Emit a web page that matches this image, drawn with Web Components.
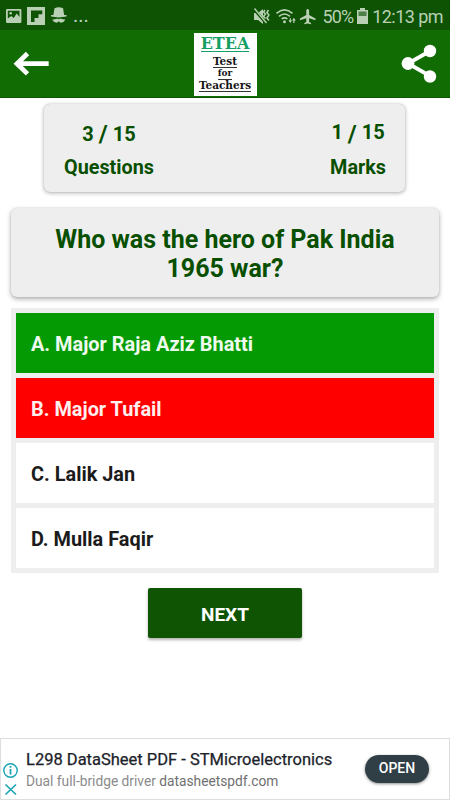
<!DOCTYPE html>
<html lang="en">
<head>
<meta charset="utf-8">
<title>ETEA Test for Teachers</title>
<style>
  body {
    margin: 0;
    width: 450px;
    height: 800px;
    overflow: hidden;
    background: #fff;
    font-family: Roboto, "Liberation Sans", sans-serif;
  }
</style>
</head>
<body>
<quiz-screen></quiz-screen>

<script>
class StatusBar extends HTMLElement {
  constructor() {
    super();
    this.attachShadow({ mode: "open" });
  }
  connectedCallback() {
    this.shadowRoot.innerHTML = `
      <style>
        :host {
          display: flex;
          justify-content: space-between;
          height: 30px;
          background: #0d5303;
          color: #b9d0b5;
          box-sizing: border-box;
          padding: 0 7px 0 6px;
        }
        svg { display: block; fill: #b9d0b5; }
        .left, .right { display: flex; align-items: center; }
        .left { padding-top: 1px; }
        .dots { font-size: 20px; line-height: 20px; margin: -2px 0 0 6px; }
        .right { font-size: 18px; white-space: nowrap; padding-top: 2px; }
        .pct { letter-spacing: -0.9px; }
        .time { letter-spacing: -0.55px; }
        .battery { margin: 0 4px 0 4px; }
      </style>
      <div class="left">
        <svg width="61" height="18" viewBox="6 7 61 18">
          <path fill-rule="evenodd" d="M7.200 9h13a1.200 1.200 0 0 1 1.200 1.200v11.600a1.200 1.200 0 0 1-1.200 1.200H7.200A1.200 1.200 0 0 1 6 21.800V10.200A1.200 1.200 0 0 1 7.200 9zM7.800 10.800v7.600l3.500-2.500 2.400 2 3-4.500 2.800 3.500v-6.100z"/>
          <circle cx="10.700" cy="13.300" r="1.300"/>
          <path fill-rule="evenodd" d="M27 7h18v18H27zM31 10.500v11.500h3.500v-4h4v-3.700h3.800v-3.800z"/>
          <path d="M54.500 8.200q4.200-1.700 8.600 0l1 6.800h2.400v1.600q-8 1.600-15.400 0V15h2.300z"/>
          <path d="M58.800 19.300c-2-1.500-3.700.8-6.500 0 .6 3 5 4.700 6.500 2 1.500 2.700 5.900 1 6.500-2-2.800.8-4.500-1.500-6.500 0z"/>
        </svg>
        <span class="dots">...</span>
      </div>
      <div class="right">
        <svg width="69" height="20" viewBox="254 5 69 20">
          <path d="M255 12h4l5-4v15l-5-4h-4z"/>
          <path d="M255 8l12 14" stroke="#0d5303" stroke-width="2.800"/>
          <path d="M255.500 7.500l12 14.500" stroke="#b9d0b5" stroke-width="1.400"/>
          <path d="M266 9l-1.500 2 2 2-2 2.500 2 2M269.500 9l-1.600 2.500 2 2.500-2 3 2 2.500" fill="none" stroke="#b9d0b5" stroke-width="1.500"/>
          <g fill="none" stroke="#b9d0b5" stroke-width="1.600">
            <path d="M277.500 12.300q8-6.800 16 0M280 15.300q5.500-4.600 11 0M282.600 18q2.900-2.400 5.800 0"/>
          </g>
          <circle cx="285.500" cy="20.700" r="1.500"/>
          <path d="M289.500 19.300h1.300V17h1v2.300h1.300l-1.800 2.700zM293 19.500l1.900-2.700 1.900 2.700h-1.300v2.500h-1.200v-2.500z"/>
          <path d="M308.700 8c1 0 1.400.9 1.400 2v4l6.400 3.500v1.700l-6.400-1.900v3.500l2 1.400v1.100l-3.400-.9-3.400.9v-1.100l2-1.400v-3.500l-6.400 1.900v-1.700l6.400-3.500v-4c0-1.100.4-2 1.400-2z"/>
        </svg>
        <span class="pct">50%</span>
        <svg class="battery" width="11" height="16" viewBox="0 0 11 16">
          <path d="M3 0h5v2h3v14H0V2h3z"/>
          <path d="M1.500 3.500h8V8h-8z" fill="#4c7f45"/>
        </svg>
        <span class="time">12:13 pm</span>
      </div>`;
    }
}
customElements.define("status-bar", StatusBar);

class AppHeader extends HTMLElement {
  constructor() {
    super();
    this.attachShadow({ mode: "open" });
  }
  connectedCallback() {
    this.shadowRoot.innerHTML = `
      <style>
        :host {
          display: flex;
          align-items: flex-start;
          justify-content: space-between;
          height: 68px;
          background: #106c03;
          box-sizing: border-box;
          padding: 3px 13px 0 13px;
          border-bottom: 1px solid #0b5a02;
        }
        svg { display: block; }
        .back { margin-top: 18px; width: 36px; }
        .share { margin-top: 11px; }
        .logo {
          width: 63px;
          height: 63px;
          background: #fff;
          display: flex;
          flex-direction: column;
          align-items: center;
          font-family: "DejaVu Serif", serif;
          font-weight: bold;
          color: #161616;
          white-space: nowrap;
        }
        .logo span {
          font-size: 10.5px;
          line-height: 11px;
          height: 11px;
          border-bottom: 1px solid #333;
        }
        .logo .etea {
          color: #14a063;
          font-size: 16px;
          line-height: 15px;
          height: 15px;
          margin: 3px 0 4px;
          border-color: #14a063;
        }
        .logo .l3 { font-size: 9px; }
      </style>
      <div class="back">
        <svg width="36" height="25" viewBox="13 51 36 25">
          <path d="M27.500 53.500L17 63.700l10.500 10.200M17 63.700h31.700" fill="none" stroke="#fff" stroke-width="4.800"/>
        </svg>
      </div>
      <div class="logo">
        <span class="etea">ETEA</span>
        <span class="l2">Test</span>
        <span class="l3">for</span>
        <span class="l4">Teachers</span>
      </div>
      <svg class="share" width="36" height="39" viewBox="402 44 36 39">
        <path d="M431 51l-22 12.500L431 76" fill="none" stroke="#fff" stroke-width="3.800"/>
        <g fill="#fff"><circle cx="431" cy="51" r="6.200"/><circle cx="409" cy="63.500" r="6.400"/><circle cx="431" cy="76.500" r="6.200"/></g>
      </svg>`;
  }
}
customElements.define("app-header", AppHeader);

class ScoreItem extends HTMLElement {
  constructor() {
    super();
    this.attachShadow({ mode: "open" });
  }
  connectedCallback() {
    this.shadowRoot.innerHTML = `
      <style>
        :host {
          display: flex;
          flex-direction: column;
          align-items: center;
          color: #084f00;
          font-weight: bold;
          font-size: 20px;
        }
        .value { height: 34px; line-height: 24px; display: flex; gap: 5px; }
        .value span { line-height: var(--num-line, 24px); }
        .value i { font-style: normal; font-size: 24px; }
        .label { line-height: 24px; font-size: 19.8px; }
      </style>
      <div class="value"><span>${this.getAttribute("value")}</span><i>/</i><span>${this.getAttribute("total")}</span></div>
      <div class="label"><slot></slot></div>`;
  }
}
customElements.define("score-item", ScoreItem);

class QuestionCard extends HTMLElement {
  constructor() {
    super();
    this.attachShadow({ mode: "open" });
  }
  connectedCallback() {
    this.shadowRoot.innerHTML = `
      <style>
        :host {
          display: block;
          box-sizing: border-box;
          height: 89px;
          padding: 17px 30px 0;
          background: #eee;
          border-radius: 6px;
          box-shadow: 0 2px 5px rgba(0,0,0,.32), 0 0 2px rgba(0,0,0,.12);
          color: #084f00;
          font-weight: bold;
          font-size: 25px;
          line-height: 29px;
          text-align: center;
        }
      </style>
      <slot></slot>`;
  }
}
customElements.define("question-card", QuestionCard);

class AnswerOption extends HTMLElement {
  constructor() {
    super();
    this.attachShadow({ mode: "open" });
  }
  connectedCallback() {
    this.shadowRoot.innerHTML = `
      <style>
        :host {
          display: flex;
          align-items: center;
          box-sizing: border-box;
          height: 60px;
          padding: 2px 0 0 15px;
          background: #fff;
          color: #1b1b1b;
          font-size: 19.900px;
          font-weight: bold;
          white-space: nowrap;
        }
        :host([state="right"]) { background: #049a03; color: #effaef; }
        :host([state="wrong"]) { background: #fe0000; color: #ffefef; }
      </style>
      <slot></slot>`;
  }
}
customElements.define("answer-option", AnswerOption);

class AdBanner extends HTMLElement {
  constructor() {
    super();
    this.attachShadow({ mode: "open" });
  }
  connectedCallback() {
    this.shadowRoot.innerHTML = `
      <style>
        :host {
          display: flex;
          box-sizing: border-box;
          height: 62px;
          border: 1px solid #dedede;
          background: #fff;
        }
        .marks { width: 25px; padding-top: 24px; }
        svg { display: block; }
        .text { flex: 1; white-space: nowrap; padding-top: 10px; }
        .title { font-size: 16.5px; line-height: 21px; color: #1b222a; -webkit-text-stroke: 0.25px #1b222a; }
        .sub { font-size: 13.75px; line-height: 22px; color: #8b8b8b; }
        .sub b { font-weight: normal; color: #707070; }
        button {
          width: 64px;
          height: 28px;
          margin: 16px 20px 0 0;
          padding: 0 0 2px;
          border: 0;
          border-radius: 14px;
          background: #303f46;
          color: #fff;
          font: 500 14px Roboto, sans-serif;
          box-shadow: 0 1px 3px rgba(0,0,0,.45);
        }
      </style>
      <div class="marks">
        <svg width="20" height="35" viewBox="1 763 20 35" fill="none" stroke="#1ba5b5">
          <circle cx="10.500" cy="770.500" r="6.700" stroke-width="1.400"/>
          <path d="M10.500 769v5.500M10.500 766v1.800" stroke-width="1.800"/>
          <path d="M5.500 784.500l10.500 10M16 784.500l-10.500 10" stroke-width="1.700"/>
        </svg>
      </div>
      <div class="text">
        <div class="title">L298 DataSheet PDF - STMicroelectronics</div>
        <div class="sub">Dual full-bridge driver <b>datasheetspdf.com</b></div>
      </div>
      <button>OPEN</button>`;
  }
}
customElements.define("ad-banner", AdBanner);

class QuizScreen extends HTMLElement {
  constructor() {
    super();
    this.attachShadow({ mode: "open" });
  }
  connectedCallback() {
    this.shadowRoot.innerHTML = `
      <style>
        :host { display: flex; flex-direction: column; height: 800px; }
        .score {
          display: flex;
          justify-content: space-between;
          box-sizing: border-box;
          height: 88px;
          margin: 6px 45px 0 44px;
          padding: 18px 19px 0 20px;
          background: #eee;
          border-radius: 6px;
          box-shadow: 0 1px 4px rgba(0,0,0,.32), 0 0 1px rgba(0,0,0,.2);
        }
        .marks { --num-line: 21px; }
        question-card { margin: 16px 11px 0; }
        .options {
          display: flex;
          flex-direction: column;
          gap: 5px;
          margin: 11px 11px 0;
          padding: 5px;
          background: #eee;
        }
        .next {
          align-self: center;
          width: 154px;
          height: 50px;
          margin-top: 15px;
          padding: 2px 0 0;
          border: 0;
          border-radius: 2px;
          background: #0e5402;
          color: #fff;
          font: bold 19px Roboto, sans-serif;
          box-shadow: 0 2px 3px rgba(0,0,0,.3);
        }
        ad-banner { margin-top: auto; }
      </style>
      <status-bar></status-bar>
      <app-header></app-header>
      <div class="score">
        <score-item value="3" total="15">Questions</score-item>
        <score-item class="marks" value="1" total="15">Marks</score-item>
      </div>
      <question-card>Who was the hero of Pak India<br>1965 war?</question-card>
      <div class="options">
        <answer-option state="right">A. Major Raja Aziz Bhatti</answer-option>
        <answer-option state="wrong">B. Major Tufail</answer-option>
        <answer-option>C. Lalik Jan</answer-option>
        <answer-option>D. Mulla Faqir</answer-option>
      </div>
      <button class="next">NEXT</button>
      <ad-banner></ad-banner>`;
  }
}
customElements.define("quiz-screen", QuizScreen);
</script>
</body>
</html>
